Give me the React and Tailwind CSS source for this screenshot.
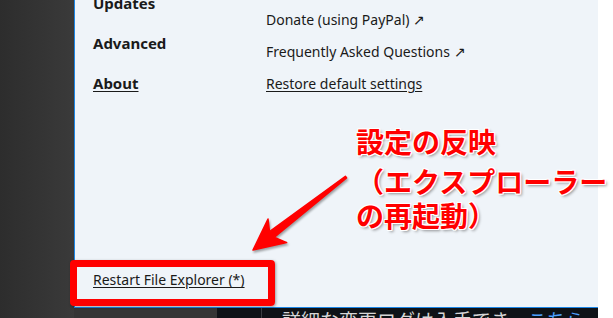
import React from "react";

const ui = "font-['Noto_Sans','Liberation_Sans',sans-serif]";
const jp = "font-['Noto_Sans_CJK_JP','Noto_Sans',sans-serif]";

// left column of the settings window
const sections = [
  { label: "Updates" },
  { label: "Advanced" },
  { label: "About", active: true },
];

const links = [
  { label: "Donate (using PayPal) ↗" },
  { label: "Frequently Asked Questions ↗" },
  { label: "Restore default settings", underline: true },
];

const Arrow = () => (
  <svg
    className="absolute left-0 top-0 pointer-events-none drop-shadow-[1px_2px_1px_rgba(0,0,0,0.35)]"
    width="613"
    height="318"
    viewBox="0 0 613 318"
  >
    <polygon
      points="253,250 268,219 269.5,231.7 345.4,176.3 346.6,177.9 274.1,237.3 286.7,242.6"
      fill="#ff0000"
      stroke="#ff0000"
      strokeWidth="1.5"
      strokeLinejoin="round"
    />
  </svg>
);

export default function App() {
  return (
    <div className="relative w-[613px] h-[318px] overflow-hidden bg-white flex">
      {/* dark desktop strip */}
      <div className="w-[74px] h-full shrink-0 bg-gradient-to-r from-[#2d2d2d] to-[#3a3a3a]" />

      {/* settings window + taskbar below it */}
      <div className="w-[524px] h-full shrink-0 flex flex-col">
        <div
          className={`h-[308px] shrink-0 bg-[#eff4f9] border-l border-b border-[#1c86e6] flex flex-col pl-[18px] text-[#1a1a1a] ${ui}`}
        >
          <div className="flex -mt-[7px]">
            <div className="w-[173px] flex flex-col gap-5">
              {sections.map((s) => (
                <div
                  key={s.label}
                  className={`h-5 leading-5 text-[15px] font-bold ${
                    s.active ? "underline underline-offset-2" : ""
                  }`}
                >
                  {s.label}
                </div>
              ))}
            </div>
            <div className="flex flex-col gap-3 pt-[17px]">
              {links.map((l) => (
                <div
                  key={l.label}
                  className={`h-5 leading-5 text-[14px] ${
                    l.underline ? "underline underline-offset-2" : ""
                  }`}
                >
                  {l.label}
                </div>
              ))}
            </div>
          </div>
          <div className="mt-auto mb-[17px] h-5 leading-5 text-[14px] underline underline-offset-2">
            Restart File Explorer (*)
          </div>
        </div>
        <div className="h-[10px] shrink-0 flex overflow-hidden">
          <div className="w-[143px] bg-[#353535]" />
          <div className="flex-1 bg-[#0e1217] flex">
            <div className="w-[45px] border-r border-[#3a3d42]" />
            <div
              className={`pl-[20px] text-[19px] leading-[24px] text-[#d6d6d6] whitespace-nowrap ${jp}`}
            >
              詳細な変更ログは入手でき、
              <span className="text-[#4ea1ff]">こちら</span>
            </div>
          </div>
        </div>
      </div>

      {/* right white margin */}
      <div className="flex-1 bg-white" />

      {/* red annotation box */}
      <div className="absolute left-[70px] top-[260px] w-[205px] h-[46px] border-[7px] border-[#ff0000] rounded-[4px] shadow-[1px_1px_3px_rgba(0,0,0,0.35)]" />

      <Arrow />

      {/* annotation text */}
      <div
        className={`absolute left-[356px] top-[124px] text-[28px] leading-[34px] font-bold text-[#ff0000] whitespace-nowrap ${jp} [text-shadow:1px_0_0_#fff,-1px_0_0_#fff,0_1px_0_#fff,0_-1px_0_#fff,1px_1px_0_#fff,-1px_-1px_0_#fff,1px_-1px_0_#fff,-1px_1px_0_#fff,2px_2px_3px_rgba(0,0,0,0.4)]`}
      >
        <div className="mb-[6px]">設定の反映</div>
        <div>（エクスプローラー</div>
        <div>の再起動）</div>
      </div>
    </div>
  );
}
